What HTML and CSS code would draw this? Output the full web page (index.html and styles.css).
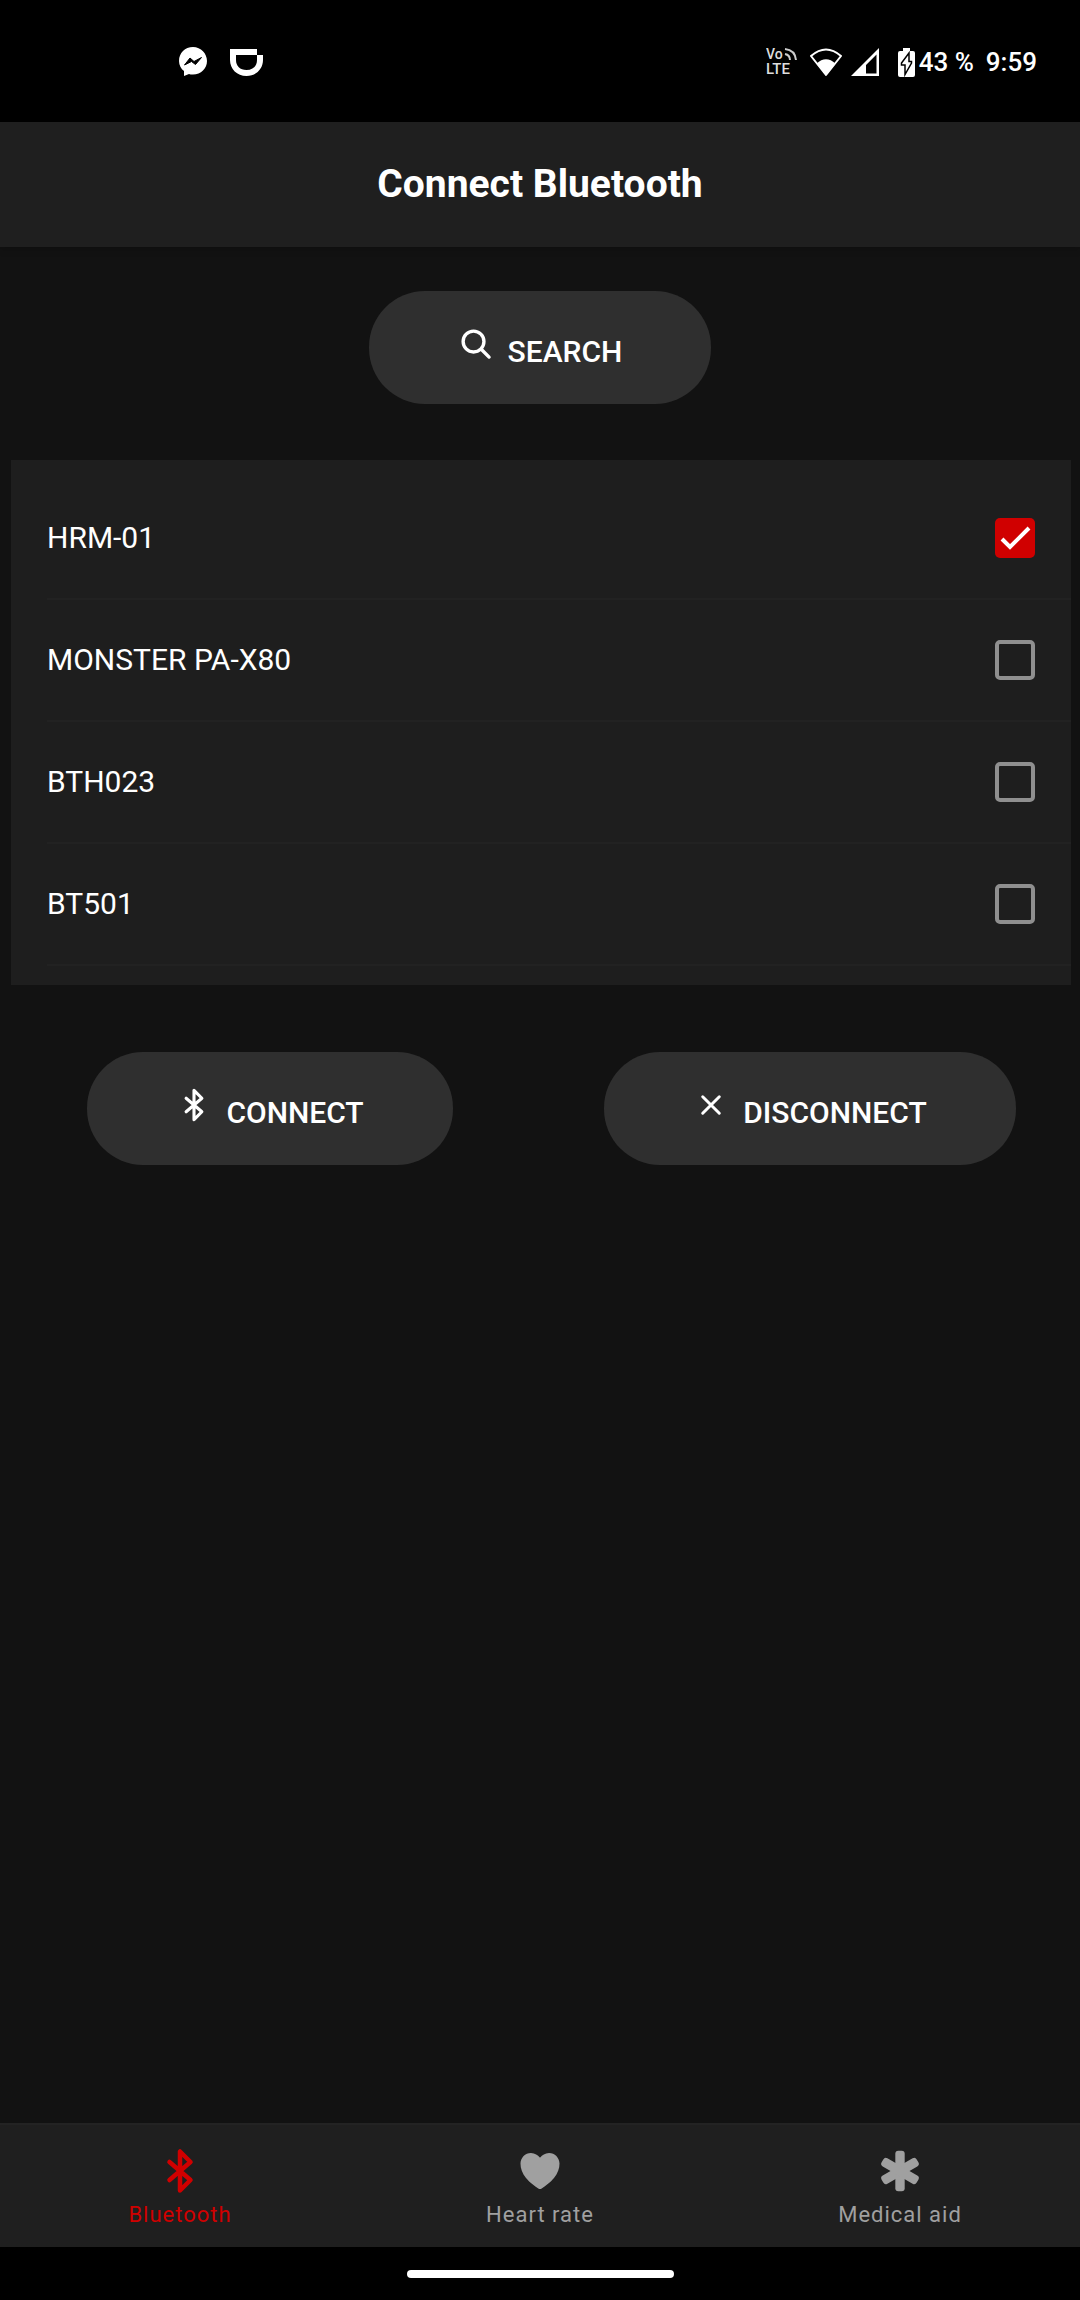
FILE: index.html
```html
<!DOCTYPE html>
<html lang="en">
<head>
<meta charset="utf-8">
<meta name="viewport" content="width=device-width, initial-scale=1">
<title>Connect Bluetooth</title>
<link rel="stylesheet" href="styles.css">
</head>
<body>
<div class="app">
  <div class="status">
    <div class="status-left">
      <svg width="28" height="30" viewBox="0 0 28 30" aria-hidden="true">
        <path fill="#fff" d="M14 0C6 0 0 6 0 14c0 4 2 8 5 10v5l5-2c1 .5 2 .5 4 .5 8 0 14-6 14-13.500S22 0 14 0z"/>
        <path fill="#000" stroke="#000" stroke-linejoin="round" d="M5.500 18 11 11l4 3.500 7.500-4L16.500 17.500l-4-3z"/>
      </svg>
      <svg width="33" height="27" viewBox="0 0 33 27" aria-hidden="true">
        <path fill="#fff" fill-rule="evenodd" d="M0 0h27v6h6v5C33 20 26 27 16.500 27S0 20 0 11zM6 6v5c0 6 4 10 10.500 10S27 17 27 11V6z"/>
      </svg>
    </div>
    <div class="status-right">
      <svg class="volte" width="31" height="32" viewBox="0 0 31 32" role="img" aria-label="VoLTE">
        <text class="vo" x="0" y="13">Vo</text>
        <text class="lte" x="0" y="28">LTE</text>
        <path fill="none" stroke="#ccc" stroke-width="2" d="M19 8q5 1 5 6M19 3q10 1 11 11"/>
      </svg>
      <svg class="wifi" width="34" height="29" viewBox="0 0 34 29" aria-hidden="true">
        <path fill="none" stroke="#fff" stroke-width="2" stroke-linejoin="round" d="M2 8Q17-5 32 8L17 27z"/>
        <path fill="#fff" d="M7.500 15.500Q17 7 26.500 15.500L17 27z"/>
      </svg>
      <svg class="signal" width="28" height="28" viewBox="0 0 28 28" aria-hidden="true">
        <path fill="#fff" fill-rule="evenodd" d="M28 0v28H0zM25.500 6.500 15 17v8.500h10.500z"/>
      </svg>
      <svg class="battery" width="17" height="29" viewBox="0 0 17 29" aria-hidden="true">
        <path fill="#fff" d="M5 0h7v3h3q2 0 2 2v22q0 2-2 2H2q-2 0-2-2V5q0-2 2-2h3z"/>
        <path fill="#fff" stroke="#000" stroke-width="1.500" d="M11 5 3.500 15v2H7v9.500L13.500 15v-1.500H11z"/>
      </svg>
      <span class="percent">43 %</span>
      <span>9:59</span>
    </div>
  </div>

  <header class="toolbar"><h1>Connect Bluetooth</h1></header>

  <main class="content">
    <div class="search">
      <button class="pill" type="button">
        <svg viewBox="0 0 512 512" aria-hidden="true"><circle cx="221" cy="221" r="148" stroke-width="48"/><path stroke-width="48" d="M338 338 442 442"/></svg>
        <span>SEARCH</span>
      </button>
    </div>

    <ul class="devices">
      <li><label for="d1">HRM-01</label><input type="checkbox" id="d1" checked></li>
      <li><label for="d2">MONSTER PA-X80</label><input type="checkbox" id="d2"></li>
      <li><label for="d3">BTH023</label><input type="checkbox" id="d3"></li>
      <li><label for="d4">BT501</label><input type="checkbox" id="d4"></li>
    </ul>

    <div class="actions">
      <button class="pill" type="button">
        <svg viewBox="0 0 512 512" aria-hidden="true"><path stroke-width="44" d="M144 352l224-192L256 48v416l112-112-224-192"/></svg>
        <span>CONNECT</span>
      </button>
      <button class="pill" type="button">
        <svg viewBox="0 0 512 512" aria-hidden="true"><path stroke-width="42" d="M374 138 138 374M374 374 138 138"/></svg>
        <span>DISCONNECT</span>
      </button>
    </div>
  </main>

  <nav class="tabs">
    <a class="tab active" href="#bluetooth" aria-current="page">
      <svg viewBox="0 0 512 512" aria-hidden="true"><path fill="none" stroke="currentColor" stroke-width="48" stroke-linecap="round" stroke-linejoin="round" d="M144 352l224-192L256 48v416l112-112-224-192"/></svg>
      <span>Bluetooth</span>
    </a>
    <a class="tab" href="#heart">
      <svg viewBox="0 0 512 512" aria-hidden="true"><path fill="currentColor" d="M256 448a32 32 0 01-18-5.570c-78.590-53.350-112.620-89.930-131.390-112.800-40-48.750-59.150-98.800-58.610-153C48.630 114.520 98.460 64 159.080 64c44.080 0 74.610 24.830 92.390 45.510a6 6 0 009.060 0C278.310 88.810 308.840 64 352.920 64c60.620 0 110.450 50.520 111.080 112.640.54 54.210-18.630 104.260-58.610 153-18.770 22.870-52.800 59.450-131.390 112.800a32 32 0 01-18 5.560z"/></svg>
      <span>Heart rate</span>
    </a>
    <a class="tab" href="#medical">
      <svg viewBox="0 0 512 512" aria-hidden="true"><g fill="currentColor"><rect x="206" y="40" width="100" height="432" rx="32"/><rect x="206" y="40" width="100" height="432" rx="32" transform="rotate(60 256 256)"/><rect x="206" y="40" width="100" height="432" rx="32" transform="rotate(-60 256 256)"/></g></svg>
      <span>Medical aid</span>
    </a>
  </nav>
  <div class="home"><div class="home-bar"></div></div>
</div>
</body>
</html>
```
FILE: styles.css
```css
* {
  box-sizing: border-box;
}

body {
  margin: 0;
  background: #121212;
  color: #fff;
  font-family: Roboto, "Liberation Sans", sans-serif;
}

.app {
  display: flex;
  flex-direction: column;
  min-height: 100vh;
}

/* System status bar */
.status {
  display: flex;
  justify-content: space-between;
  align-items: center;
  height: 122px;
  padding: 2px 43px 0 179px;
  background: #000;
  font-size: 26px;
  font-weight: 500;
  line-height: 30px;
}

.status-left,
.status-right {
  display: flex;
  align-items: center;
}

.status-left {
  gap: 23px;
}

.wifi {
  margin-left: 12px;
}

.signal {
  margin-left: 8px;
}

.battery {
  margin-left: 19px;
}

.percent {
  margin: 0 12px 0 4px;
}

.volte text {
  fill: #ddd;
}

.vo {
  font-size: 14px;
}

.lte {
  font-size: 15px;
}

.toolbar {
  display: flex;
  align-items: center;
  justify-content: center;
  height: 125px;
  padding-bottom: 2px;
  background: #1f1f1f;
  box-shadow: 0 2px 8px rgba(0, 0, 0, 0.2);
}

.toolbar h1 {
  margin: 0;
  font-size: 39px;
  font-weight: 700;
  line-height: 46px;
}

.content {
  flex: 1;
  padding: 44px 0;
}

.search {
  display: flex;
  justify-content: center;
}

.pill {
  display: flex;
  align-items: baseline;
  gap: 14px;
  padding: 35px 89px;
  border: 0;
  border-radius: 56px;
  background: #2f2f2f;
  color: #fff;
  font: 500 30px/35px Roboto, "Liberation Sans", sans-serif;
}

.pill svg {
  width: 36px;
  height: 36px;
  fill: none;
  stroke: currentColor;
  stroke-linecap: round;
  stroke-linejoin: round;
}

/* Found devices */
.devices {
  margin: 56px 9px 0 11px;
  padding: 18px 0 19px 36px;
  background: #1e1e1e;
  list-style: none;
}

.devices li {
  display: flex;
  align-items: center;
  justify-content: space-between;
  min-height: 122px;
  padding-right: 36px;
  border-bottom: 2px solid #222;
  font-size: 30px;
  line-height: 36px;
}

.devices input {
  appearance: none;
  width: 40px;
  height: 40px;
  margin: 0;
  border: 4px solid #8f8f8f;
  border-radius: 5px;
}

.devices input:checked {
  border: 0;
  background: #d00000 url("data:image/svg+xml,%3Csvg xmlns='http://www.w3.org/2000/svg' viewBox='0 0 40 40'%3E%3Cpath fill='none' stroke='white' stroke-width='4' d='M7 21l8 8 19-19'/%3E%3C/svg%3E");
}

.actions {
  display: grid;
  grid-template-columns: 1fr 1fr;
  justify-items: center;
  margin-top: 67px;
}

.tabs {
  display: grid;
  grid-template-columns: 1fr 1fr 1fr;
  height: 124px;
  border-top: 2px solid #232323;
  background: #1f1f1f;
}

.tab {
  display: flex;
  flex-direction: column;
  align-items: center;
  padding-top: 22px;
  color: #a0a0a0;
  font-size: 22px;
  letter-spacing: 1px;
  line-height: 26px;
  text-decoration: none;
}

.tab svg {
  width: 48px;
  height: 48px;
  margin-bottom: 7px;
}

.tab.active {
  color: #d00000;
}

.home {
  display: flex;
  align-items: center;
  justify-content: center;
  height: 53px;
  background: #000;
}

.home-bar {
  width: 267px;
  height: 8px;
  border-radius: 4px;
  background: #fff;
}
```
